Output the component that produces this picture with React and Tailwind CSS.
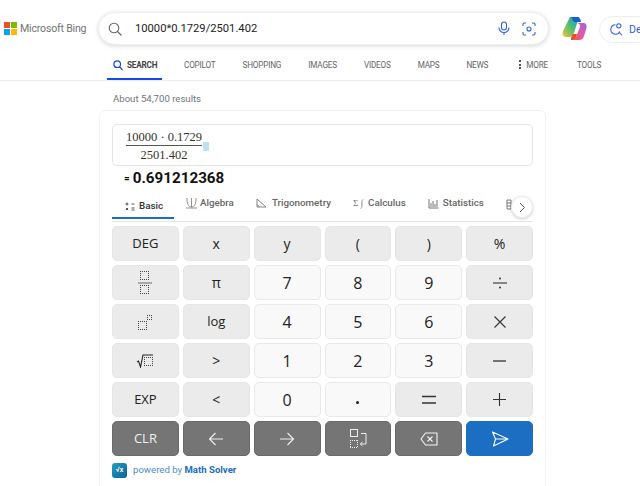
import React from "react";

const F = "font-['Roboto',sans-serif]";

function Box({ x, y, s, c = "#444" }) {
  return (
    <path
      d={`M${x} ${y + 0.5}h${s}M${x} ${y + s - 0.5}h${s}M${x + 0.5} ${y}v${s}M${x + s - 0.5} ${y}v${s}`}
      fill="none"
      stroke={c}
      strokeWidth="1"
      strokeDasharray="1 1"
      shapeRendering="crispEdges"
    />
  );
}

const I = {
  frac: (
    <svg width="16" height="24" viewBox="0 0 16 24">
      <Box x={3} y={0} s={9} />
      <path d="M1 12h14" stroke="#666" strokeWidth="1" />
      <Box x={3} y={14} s={9} />
    </svg>
  ),
  pow: (
    <svg width="16" height="16" viewBox="0 0 16 16">
      <Box x={1} y={7} s={9} />
      <Box x={10} y={1} s={5} />
    </svg>
  ),
  root: (
    <svg width="18" height="14" viewBox="0 0 18 14">
      <path d="M1 8l1.500-1 2 6L7 1h10" fill="none" stroke="#222" strokeWidth="1.100" />
      <Box x={8} y={3} s={9} />
    </svg>
  ),
  div: (
    <svg width="16" height="14" viewBox="0 0 16 14">
      <path d="M1 7h14" stroke="#333" strokeWidth="1.100" />
      <circle cx="8" cy="2.500" r="1" fill="#333" />
      <circle cx="8" cy="11.500" r="1" fill="#333" />
    </svg>
  ),
  times: (
    <svg width="14" height="14" viewBox="0 0 14 14">
      <path d="M1.500 1.500l11 11M12.500 1.500l-11 11" stroke="#333" strokeWidth="1.100" />
    </svg>
  ),
  minus: (
    <svg width="15" height="4" viewBox="0 0 15 4">
      <path d="M1 2h13" stroke="#333" strokeWidth="1.300" />
    </svg>
  ),
  eq: (
    <svg width="16" height="10" viewBox="0 0 16 10">
      <path d="M1 1.500h14M1 8h14" stroke="#333" strokeWidth="1.400" />
    </svg>
  ),
  plus: (
    <svg width="15" height="15" viewBox="0 0 15 15">
      <path d="M1 7.500h13M7.500 1v13" stroke="#333" strokeWidth="1.100" />
    </svg>
  ),
  dot: <span className="block w-[3px] h-[3px] rounded-full bg-[#222] mt-[5px]" />,
  left: (
    <svg width="16" height="14" viewBox="0 0 16 14">
      <path d="M15 7H1.500M7.500 1l-6 6 6 6" fill="none" stroke="#f0f0f0" strokeWidth="1.100" />
    </svg>
  ),
  right: (
    <svg width="16" height="14" viewBox="0 0 16 14">
      <path d="M1 7h13.500M8.500 1l6 6-6 6" fill="none" stroke="#f0f0f0" strokeWidth="1.100" />
    </svg>
  ),
  swap: (
    <svg width="18" height="21" viewBox="0 0 18 21">
      <rect x="1.500" y="1.500" width="7" height="7" fill="none" stroke="#eee" strokeWidth="1" />
      <Box x={1} y={12} s={8} c="#eee" />
      <path d="M12 5.500h5v10.500h-5.500M13.500 14l-2.200 2 2.200 2" fill="none" stroke="#eee" strokeWidth="1" />
    </svg>
  ),
  back: (
    <svg width="18" height="14" viewBox="0 0 18 14">
      <path d="M5.500 1H17v12H5.500L1 7z" fill="none" stroke="#f5f5f5" strokeWidth="1.100" strokeLinejoin="round" />
      <path d="M7.500 4.500l5 5M12.500 4.500l-5 5" stroke="#f5f5f5" strokeWidth="1.100" />
    </svg>
  ),
  send: (
    <svg width="18" height="16" viewBox="0 0 18 16">
      <path d="M1.500 1L17 8 2.500 15l2-7zM4.500 8H17" fill="none" stroke="#fff" strokeWidth="1.100" strokeLinejoin="round" />
    </svg>
  ),
};

const rows = [
  [["DEG", "g"], ["x", "g"], ["y", "g"], ["(", "g"], [")", "g"], ["%", "g"]],
  [[I.frac, "g"], ["π", "g"], ["7", "w"], ["8", "w"], ["9", "w"], [I.div, "g"]],
  [[I.pow, "g"], ["log", "g"], ["4", "w"], ["5", "w"], ["6", "w"], [I.times, "g"]],
  [[I.root, "g"], [">", "g"], ["1", "w"], ["2", "w"], ["3", "w"], [I.minus, "g"]],
  [["EXP", "g"], ["<", "g"], ["0", "w"], [I.dot, "w"], [I.eq, "g"], [I.plus, "g"]],
  [["CLR", "d"], [I.left, "d"], [I.right, "d"], [I.swap, "d"], [I.back, "d"], [I.send, "b"]],
];

const kind = {
  g: "bg-[#ebebeb] border-[#e6e6e6] text-[#222]",
  w: "bg-[#f9f9f9] border-[#e9e9e9] text-[#222]",
  d: "bg-[#757575] border-[#6a6a6a] text-[#f0f0f0]",
  b: "bg-[#1b6ec2] border-[#1b6ec2] text-white",
};

function Key({ label, k }) {
  const big = /^[0-9]$/.test(label);
  const sym = typeof label === "string" && label.length === 1 && !big;
  return (
    <div
      className={`h-[35px] rounded-[5px] border flex items-center justify-center font-['Open_Sans',sans-serif] ${
        big ? "text-[16px]" : sym ? "text-[14px]" : "text-[13px]"
      } ${kind[k]}`}
    >
      {label}
    </div>
  );
}

function NavItem({ children, className = "" }) {
  return <span className={`text-[8.200px] tracking-[-0.2px] text-[#666] ${className}`}>{children}</span>;
}

function CalcTab({ icon, label, className = "" }) {
  return (
    <div className={`flex items-center text-[9.800px] font-medium text-[#666] ${className}`}>
      {icon}
      <span>{label}</span>
    </div>
  );
}

export default function App() {
  return (
    <div className={`w-[640px] h-[486px] overflow-hidden bg-white ${F}`}>
      {/* Header */}
      <div className="h-[58px] flex items-start pt-[12px] pl-[4px] whitespace-nowrap">
        <div className="flex items-center h-[33px] w-[94px] gap-[3px] shrink-0">
          <div className="grid grid-cols-2 gap-[1px] w-[13px] h-[13px] shrink-0">
            <span className="bg-[#f25022]" />
            <span className="bg-[#7fba00]" />
            <span className="bg-[#00a4ef]" />
            <span className="bg-[#ffb900]" />
          </div>
          <span className="text-[10.600px] text-[#737373] tracking-[-0.2px]">Microsoft Bing</span>
        </div>
        <div className="w-[451px] h-[33px] shrink-0 rounded-full bg-white border border-[#eeeeee] shadow-[0_1px_4px_rgba(0,0,0,0.16)] flex items-center pl-[9px] pr-[12px]">
          <svg width="14" height="14" viewBox="0 0 14 14" className="shrink-0">
            <circle cx="6" cy="6" r="4.800" fill="none" stroke="#666" strokeWidth="1.100" />
            <path d="M9.500 9.500l4 4" stroke="#666" strokeWidth="1.100" />
          </svg>
          <span className="ml-[13px] pt-[2px] text-[11.200px] text-[#222] flex-1">10000*0.1729/2501.402</span>
          <svg width="12" height="15" viewBox="0 0 12 15" className="shrink-0 mr-[12px]">
            <rect x="3.500" y="1" width="5" height="8" rx="2.500" fill="none" stroke="#2f5fe0" strokeWidth="1.100" />
            <path d="M1 6.500a5 5 0 0 0 10 0M6 11.500V14" fill="none" stroke="#2f5fe0" strokeWidth="1.100" />
          </svg>
          <svg width="14" height="14" viewBox="0 0 14 14" className="shrink-0">
            <path d="M1 4V2.500A1.500 1.500 0 0 1 2.500 1H4M10 1h1.500A1.500 1.500 0 0 1 13 2.500V4M13 10v1.500a1.500 1.500 0 0 1-1.500 1.500H10M4 13H2.500A1.500 1.500 0 0 1 1 11.500V10" fill="none" stroke="#2f5fe0" strokeWidth="1.100" />
            <circle cx="7" cy="7" r="2" fill="none" stroke="#2f5fe0" strokeWidth="1.100" />
          </svg>
        </div>
        <svg width="25" height="25" viewBox="0 0 25 25" className="ml-[13px] mt-[4px] shrink-0">
          <defs>
            <linearGradient id="cl" x1="0" y1="1" x2="1" y2="0">
              <stop offset="0" stopColor="#f5c33b" />
              <stop offset="0.5" stopColor="#4fbf6f" />
              <stop offset="1" stopColor="#1a8fe0" />
            </linearGradient>
            <linearGradient id="cr" x1="0" y1="1" x2="1" y2="0">
              <stop offset="0" stopColor="#f2592b" />
              <stop offset="0.5" stopColor="#e558a8" />
              <stop offset="1" stopColor="#9a6ae0" />
            </linearGradient>
          </defs>
          <path d="M8 1h9l-5 16c-1 3-2 4-5 4H4C1 21 0 18 1 15z" fill="url(#cl)" />
          <path d="M9 1h6c2 0 3 1 3.500 3l.5 2h-7z" fill="#1560d0" />
          <path d="M14 7h7c3 0 4 2 3.500 5L22 20c-1 3-2.500 4-5 4h-8c3 0 4-1 5-3l4-10c.5-2-1-4-4-4z" fill="url(#cr)" />
          <path d="M9 24c2 0 4 0 5-3l1-3h-4l-2 4z" fill="#ee4a2a" />
        </svg>
        <div className="ml-[12px] h-[27px] mt-[4px] w-[60px] rounded-l-full border border-[#eeeeee] flex items-center pl-[10px] gap-[6px] shrink-0">
          <svg width="13" height="15" viewBox="0 0 14 15" className="shrink-0">
            <path d="M6 2.500a5 5 0 1 0 4.500 7M9.500 10l3.500 4" fill="none" stroke="#2f5fe0" strokeWidth="1.100" />
            <circle cx="9.500" cy="3.500" r="2.300" fill="none" stroke="#2f5fe0" strokeWidth="1.100" />
          </svg>
          <span className="text-[10.500px] text-[#2f5fe0]">De</span>
        </div>
      </div>

      {/* Nav */}
      <div className="h-[23px] border-b border-[#ececec] pl-[107px] flex items-start whitespace-nowrap">
        <div className="h-[22px] w-[55px] border-b-[2px] border-[#174ae4] flex items-start pl-[6px] gap-[4px] -mb-px shrink-0">
          <svg width="10" height="11" viewBox="0 0 10 11" className="mt-[2px] shrink-0">
            <circle cx="4.200" cy="4.200" r="3.300" fill="none" stroke="#174ae4" strokeWidth="1.200" />
            <path d="M6.700 6.800l2.800 3.200" stroke="#174ae4" strokeWidth="1.200" />
          </svg>
          <span className="text-[8.200px] tracking-[-0.2px] font-bold text-[#444] leading-[14px]">SEARCH</span>
        </div>
        <div className="flex items-center h-[14px] ml-[22px] gap-[27px]">
          <NavItem>COPILOT</NavItem>
          <NavItem>SHOPPING</NavItem>
          <NavItem>IMAGES</NavItem>
          <NavItem>VIDEOS</NavItem>
          <NavItem>MAPS</NavItem>
          <NavItem>NEWS</NavItem>
          <div className="flex items-center gap-[5px] ml-[4px]">
            <span className="flex flex-col gap-[1.500px]">
              <span className="w-[2px] h-[2px] bg-[#555]" />
              <span className="w-[2px] h-[2px] bg-[#555]" />
              <span className="w-[2px] h-[2px] bg-[#555]" />
            </span>
            <NavItem>MORE</NavItem>
          </div>
          <NavItem className="ml-[2px]">TOOLS</NavItem>
        </div>
      </div>

      {/* Results count */}
      <div className="pl-[113px] h-[29px] pt-[11px] text-[9.600px] leading-[14px] text-[#70757a]">About 54,700 results</div>

      {/* Card */}
      <div className="ml-[99px] w-[447px] h-[400px] border border-[#f2f2f2] rounded-[6px] px-[12px] pt-[13px]">
        <div className="h-[42px] rounded-[5px] border border-[#e5e5e5] flex items-start pl-[13px] pt-[5px]">
          <div className="flex flex-col items-center font-['Liberation_Serif',serif] text-[12.500px] text-[#333] leading-[14px]">
            <span className="pb-[1px]">10000 · 0.1729</span>
            <span className="border-t border-[#555] w-full text-center pt-[2px]">2501.402</span>
          </div>
          <span className="w-[6px] h-[9px] bg-[#bfe0ee] ml-[1px] mt-[12px]" />
        </div>

        <div className="flex items-center h-[23px] pl-[12px] mt-[1px] text-[#111] font-bold">
          <span className="text-[10px] mr-[3px]">=</span>
          <span className="text-[15.200px]">0.691212368</span>
        </div>

        {/* Calc tabs */}
        <div className="relative h-[29px] border-b border-[#e5e5e5] flex items-start whitespace-nowrap mt-[3px] pt-[3px] pl-[13px]">
          <div className="absolute left-0 bottom-[2px] w-[62px] h-[2px] bg-[#1b6ec2]" />
          <CalcTab
            className="!text-[#333] w-[61px] font-bold mt-[3px]"
            label="Basic"
            icon={
              <svg width="10" height="9" viewBox="0 0 10 9" className="shrink-0 mr-[4px]">
                <path d="M2 0.500v3M0.500 2h3M6.500 2h3M1 6l2 2M3 6l-2 2M6.500 6h3M6.500 8h3" stroke="#444" strokeWidth="0.900" />
              </svg>
            }
          />
          <CalcTab
            label="Algebra"
            icon={
              <svg width="11" height="12" viewBox="0 0 11 12" className="shrink-0 mr-[3px]">
                <path d="M1 1c0 5 1 9 4.500 9S10 6 10 1M5.500 1v9M0 11h11" fill="none" stroke="#777" strokeWidth="0.800" />
              </svg>
            }
          />
          <CalcTab
            className="ml-[22px]"
            label="Trigonometry"
            icon={
              <svg width="11" height="10" viewBox="0 0 11 10" className="shrink-0 mr-[5px]">
                <path d="M1 1v8h9zM1 6.500l2.500 2.500" fill="none" stroke="#777" strokeWidth="0.900" />
              </svg>
            }
          />
          <CalcTab
            className="ml-[22px]"
            label="Calculus"
            icon={<span className="font-['Liberation_Serif',serif] text-[9px] font-normal w-[15px] shrink-0 text-[#777]">Σ ∫</span>}
          />
          <CalcTab
            className="ml-[22px]"
            label="Statistics"
            icon={
              <svg width="11" height="11" viewBox="0 0 11 11" className="shrink-0 mr-[4px]">
                <path d="M1 1v9h9.500M3 9V5M5 9V3M7 9V6M9 9V2" fill="none" stroke="#777" strokeWidth="1" />
              </svg>
            }
          />
          <svg width="10" height="11" viewBox="0 0 10 11" className="absolute left-[394px] top-[6px]">
            <path d="M1 1h4v9H1zM1 4h4M1 7h4" fill="none" stroke="#777" strokeWidth="1" />
          </svg>
          <div className="absolute left-[399px] top-[3px] w-[22px] h-[22px] rounded-full bg-white border border-[#eee] shadow-[0_1px_3px_rgba(0,0,0,0.2)] flex items-center justify-center z-10">
            <svg width="7" height="11" viewBox="0 0 7 11">
              <path d="M1 1l4.500 4.500L1 10" fill="none" stroke="#555" strokeWidth="1" />
            </svg>
          </div>
        </div>

        {/* Keypad */}
        <div className="grid grid-cols-6 gap-x-[4px] gap-y-[4px] mt-[4px]">
          {rows.flat().map(([label, k], i) => (
            <Key key={i} label={label} k={k} />
          ))}
        </div>

        {/* Footer */}
        <div className="flex items-center h-[15px] mt-[7px] text-[9.600px] text-[#1b6ec2]">
          <div className="w-[15px] h-[15px] rounded-[3px] bg-gradient-to-br from-[#2a9fb8] to-[#0d5f9e] flex items-center justify-center text-white text-[7px] font-bold mr-[6px]">
            √x
          </div>
          <span className="opacity-80">powered by&nbsp;</span>
          <span className="font-bold">Math Solver</span>
        </div>
      </div>
    </div>
  );
}
